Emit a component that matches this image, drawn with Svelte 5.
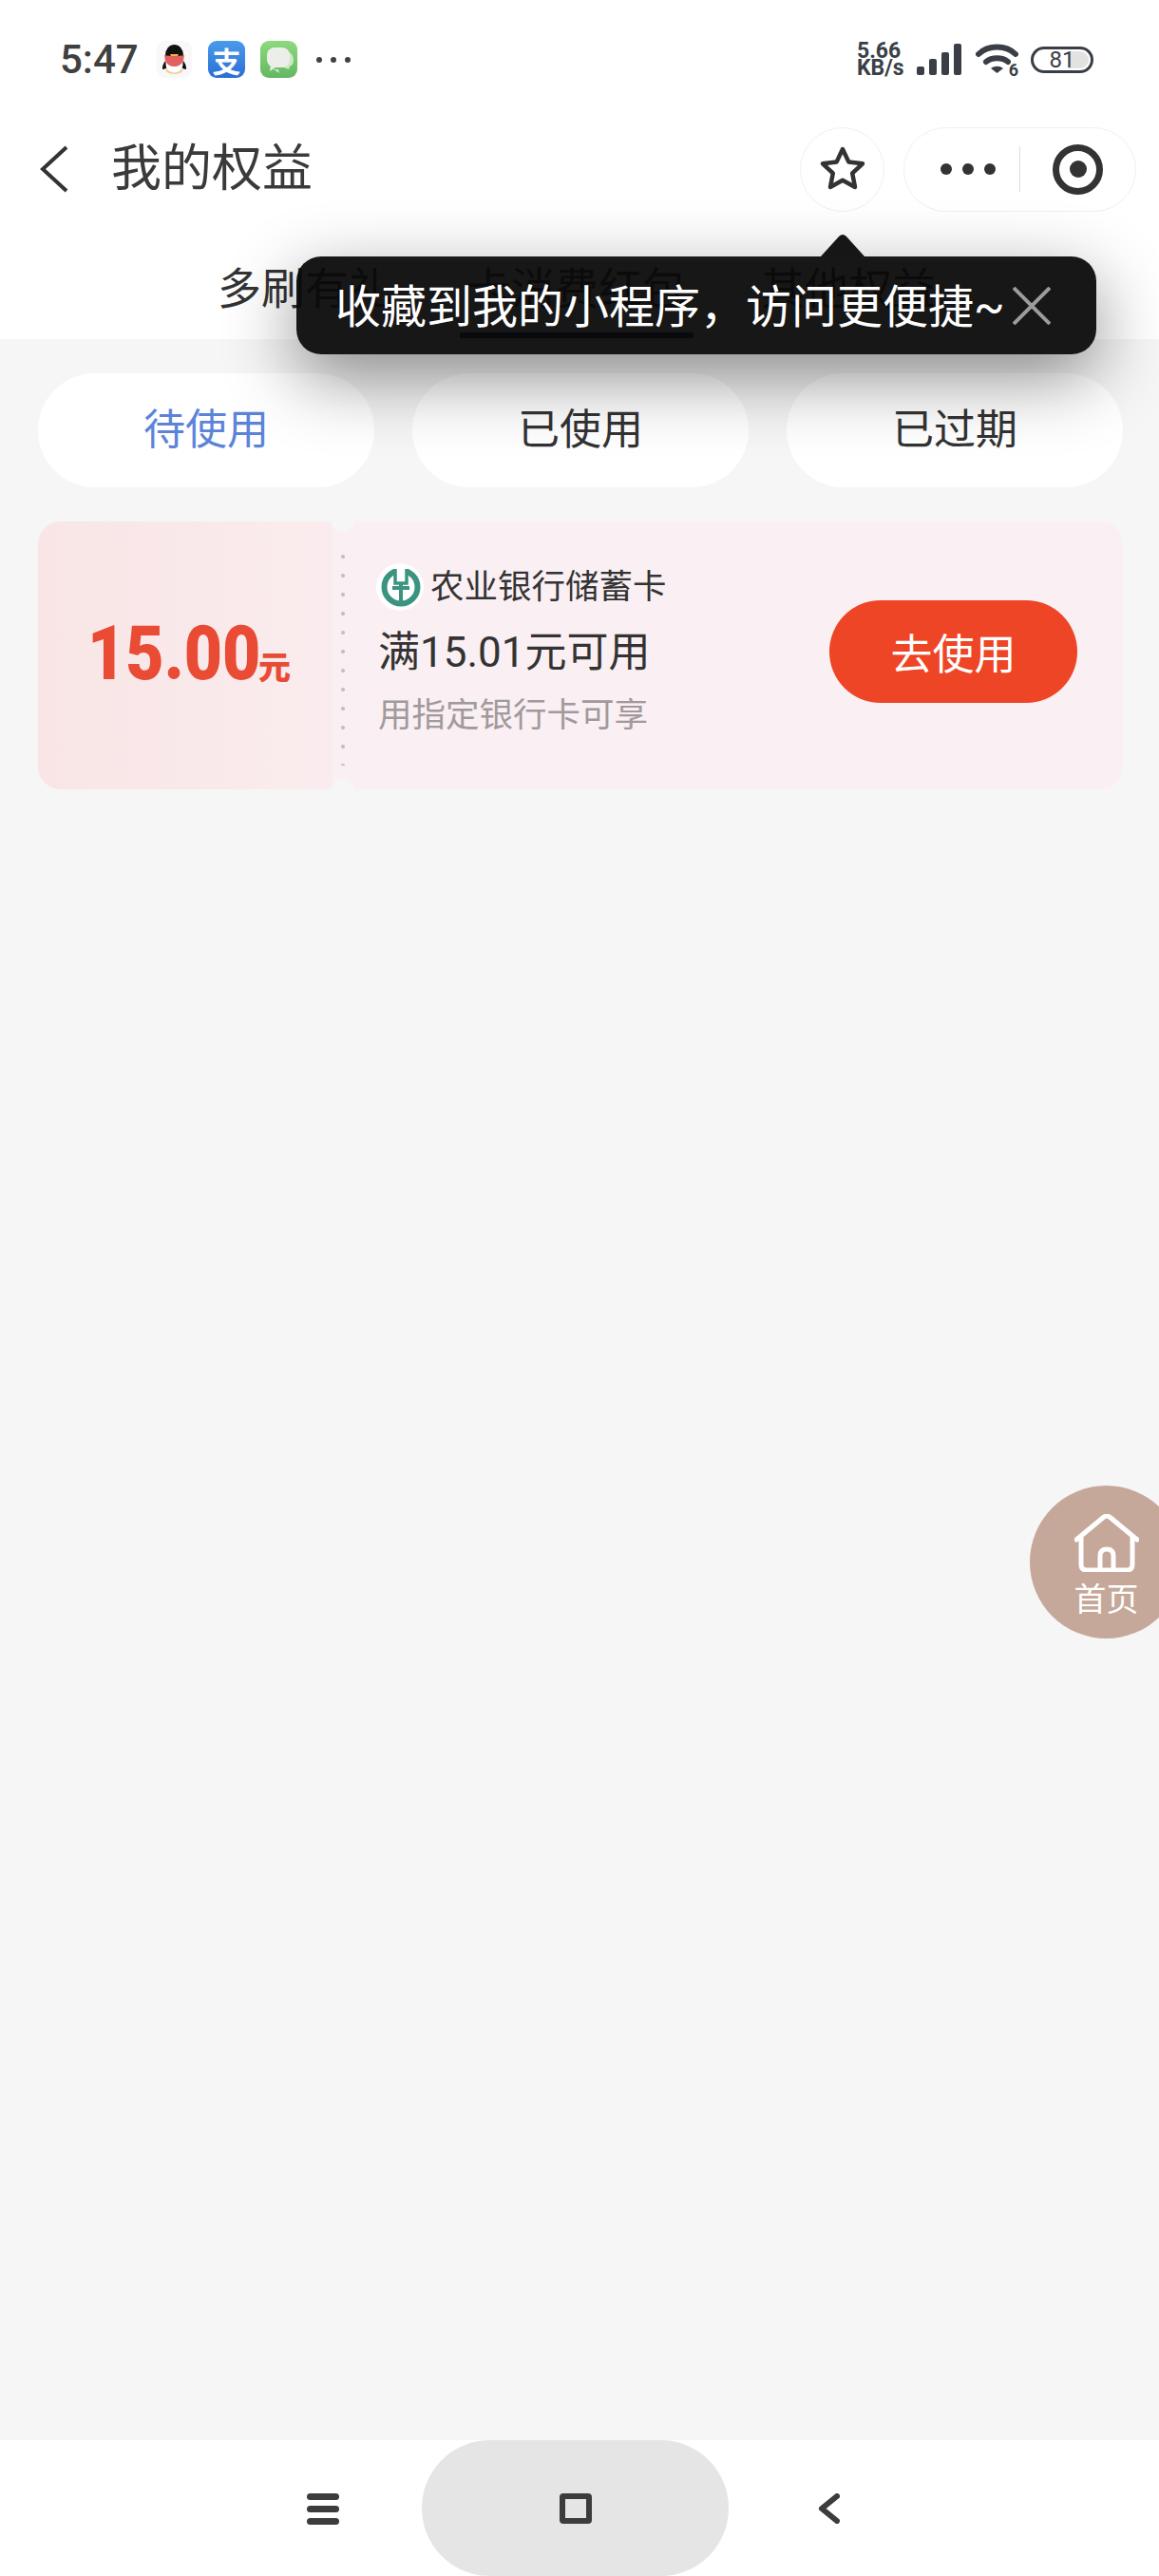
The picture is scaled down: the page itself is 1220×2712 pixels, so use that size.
<script>
  const filters = [
    { label: '待使用', active: true },
    { label: '已使用', active: false },
    { label: '已过期', active: false }
  ];
</script>

<div class="page">
  <header class="top">
    <div class="status">
      <div class="status-left">
        <span class="time">5:47</span>
        <span class="tile qq">
          <svg viewBox="0 0 37 39" width="37" height="39">
            <ellipse cx="18.5" cy="31" rx="9" ry="4" fill="#f2a33a" opacity=".5" />
            <ellipse cx="18.5" cy="15" rx="9.500" ry="11" fill="#111" />
            <path d="M9 21c-2 3-3.500 6-3 9 2 0 3.500-1 5-2zM28 21c2 3 3.500 6 3 9-2 0-3.500-1-5-2z" fill="#111" />
            <ellipse cx="18.5" cy="25" rx="9" ry="8.500" fill="#fff" />
            <path d="M8 15c6 1.500 15 1.500 21 0l-1 6c-2 4-5 6-9.500 6S11 25 9 21z" fill="#e0615f" />
            <path d="M14 14h9l-1 2h-7z" fill="#f0b53c" />
          </svg>
        </span>
        <span class="tile alipay">支</span>
        <span class="tile msg">
          <svg viewBox="0 0 39 39" width="39" height="39">
            <path d="M14 30l6 4-1-4z" fill="#e9efe6" opacity=".8" />
            <path d="M30 12c3 1 5 4 5 8 0 3-1 6-4 7l-1 3-5-2h-8z" fill="#cfe6c7" />
            <rect x="7" y="7" width="24" height="21" rx="8" fill="#ecefe9" />
            <path d="M11 26l-1 6 6-4z" fill="#ecefe9" />
          </svg>
        </span>
        <span class="more-dots"><i></i><i></i><i></i></span>
      </div>
      <div class="status-right">
        <div class="speed"><span>5.66</span><span>KB/s</span></div>
        <div class="signal"><i class="b1"></i><i class="b2"></i><i class="b3"></i><i class="b4"></i></div>
        <div class="wifi">
          <svg viewBox="0 0 45 33" width="45" height="33">
            <path d="M3 11C13 1 32 1 42 11" fill="none" stroke="#3a3f47" stroke-width="6" stroke-linecap="round" />
            <path d="M11 19c6-5 17-5 23 0" fill="none" stroke="#3a3f47" stroke-width="6" stroke-linecap="round" />
            <path d="M16 26c4-3 9-3 13 0l-6.500 5z" fill="#3a3f47" />
          </svg>
          <span>6</span>
        </div>
        <div class="battery"><i></i><span>81</span></div>
      </div>
    </div>

    <nav class="navbar">
      <svg class="back" viewBox="0 0 31 50" width="31" height="50">
        <path d="M29 2L4 25l25 23" fill="none" stroke="#333" stroke-width="4" />
      </svg>
      <h1>我的权益</h1>
      <button class="star-btn" aria-label="收藏">
        <svg viewBox="0 0 50 50" width="50" height="50">
          <path d="M25 4l6.300 13.400 14.700 1.900-10.800 10.100 2.800 14.600L25 36.800l-13 7.200 2.800-14.600L4 19.300l14.700-1.900z" fill="none" stroke="#333" stroke-width="4.500" stroke-linejoin="round" />
        </svg>
      </button>
      <div class="capsule">
        <span class="cap-dots"><i></i><i></i><i></i></span>
        <span class="cap-line"></span>
        <span class="record"><i></i></span>
      </div>
    </nav>

    <div class="tabs">
      <span class="tab">多刷有礼</span>
      <span class="tab current">卡消费红包</span>
      <span class="tab">其他权益</span>
    </div>
  </header>

  <main class="content">
    <div class="filters">
      {#each filters as f}
        <div class="filter" class:active={f.active}>{f.label}</div>
      {/each}
    </div>

    <div class="card">
      <div class="stub">
        <span class="amount">15.00</span><span class="unit">元</span>
      </div>
      <div class="detail">
        <div class="info">
          <div class="bank">
            <span class="logo">
              <svg viewBox="0 0 50 50" width="50" height="50">
                <circle cx="25" cy="25" r="25" fill="#fff" />
                <circle cx="26" cy="25" r="17.500" fill="none" stroke="#3b9480" stroke-width="6" />
                <rect x="19" y="3" width="14" height="8" fill="#fff" />
                <path d="M20 6v15h12V6" fill="none" stroke="#3b9480" stroke-width="3.500" />
                <path d="M24.500 4v11h3V4" fill="#fff" />
                <path d="M17 26h18M26 21v22" fill="none" stroke="#3b9480" stroke-width="4" />
              </svg>
            </span>
            <span>农业银行储蓄卡</span>
          </div>
          <div class="limit">满15.01元可用</div>
          <div class="hint">用指定银行卡可享</div>
        </div>
        <button class="use-btn">去使用</button>
      </div>
      <span class="notch n-top"></span>
      <span class="notch n-bottom"></span>
      <span class="perf"></span>
    </div>
  </main>

  <footer class="sysnav">
    <span class="menu"><i></i><i></i><i></i></span>
    <span class="home-pill"><span class="square"></span></span>
    <svg class="sys-back" viewBox="0 0 23 32" width="23" height="32">
      <path d="M20 3L4 16l16 13" fill="none" stroke="#3c3c3c" stroke-width="6" stroke-linecap="round" stroke-linejoin="round" />
    </svg>
  </footer>

  <div class="tooltip">
    <svg class="arrow" viewBox="0 0 46 24" width="46" height="24">
      <path d="M0 24L19 3q4-4 8 0l19 21z" fill="#161616" />
    </svg>
    <span class="tip-text">收藏到我的小程序，访问更便捷~</span>
    <svg class="tip-close" viewBox="0 0 40 40" width="40" height="40">
      <path d="M1 1l38 38M39 1L1 39" stroke="#9c9c9c" stroke-width="4" fill="none" />
    </svg>
  </div>

  <div class="home-float">
    <svg viewBox="0 0 68 61" width="68" height="61">
      <path d="M2 27L31 3q3-2 6 0l29 24" fill="none" stroke="#fff" stroke-width="5" stroke-linecap="round" stroke-linejoin="round" />
      <path d="M7 25v28q0 6 6 6h42q6 0 6-6V25" fill="none" stroke="#fff" stroke-width="5" stroke-linecap="round" />
      <path d="M27 58V44q0-7 7-7t7 7v14" fill="none" stroke="#fff" stroke-width="5" />
    </svg>
    <span>首页</span>
  </div>
</div>

<style>
  :global(body) {
    margin: 0;
    background: #f6f6f6;
  }

  .page {
    position: relative;
    display: flex;
    flex-direction: column;
    width: 1220px;
    height: 2712px;
    overflow: hidden;
    background: #f6f6f6;
    color: #333;
    font-family: Roboto, "Noto Sans CJK SC", sans-serif;
  }

  .top {
    background: #fff;
    height: 357px;
    flex-shrink: 0;
  }

  .status {
    display: flex;
    justify-content: space-between;
    align-items: center;
    height: 125px;
    padding: 0 69px 0 63px;
    box-sizing: border-box;
  }

  .status-left,
  .status-right {
    display: flex;
    align-items: center;
  }

  .time {
    width: 80px;
    margin-right: 22px;
    font-size: 42px;
    font-weight: 500;
    color: #404040;
    white-space: nowrap;
  }

  .tile {
    display: flex;
    align-items: center;
    justify-content: center;
    height: 39px;
    width: 39px;
    border-radius: 9px;
    margin-right: 16px;
    overflow: hidden;
  }

  .qq {
    width: 37px;
    margin-right: 17px;
    background: #f8f8f8;
  }

  .alipay {
    background: linear-gradient(#4a9bea, #2a6fd6);
    color: #fff;
    font-size: 30px;
    font-weight: 700;
  }

  .msg {
    background: linear-gradient(#8ed97d, #62b862);
    margin-right: 20px;
  }

  .more-dots {
    display: flex;
    gap: 9px;
  }

  .more-dots i {
    width: 6px;
    height: 6px;
    border-radius: 50%;
    background: #404040;
  }

  .speed {
    display: flex;
    flex-direction: column;
    width: 50px;
    margin-right: 13px;
    font-size: 23px;
    line-height: 18px;
    font-weight: 700;
    color: #3a3f47;
  }

  .signal {
    display: flex;
    align-items: flex-end;
    gap: 5px;
    height: 33px;
    margin-right: 15px;
  }

  .signal i {
    width: 8px;
    border-radius: 2px;
    background: #3a3f47;
  }

  .b1 { height: 9px; }
  .b2 { height: 17px; }
  .b3 { height: 24px; }
  .b4 { height: 33px; }

  .wifi {
    position: relative;
    width: 45px;
    height: 33px;
    margin-right: 13px;
  }

  .wifi span {
    position: absolute;
    right: 0;
    bottom: -4px;
    font-size: 18px;
    line-height: 18px;
    font-weight: 700;
    color: #3a3f47;
  }

  .battery {
    position: relative;
    display: flex;
    align-items: center;
    justify-content: center;
    width: 66px;
    height: 28px;
    box-sizing: border-box;
    border: 3px solid #3a3f47;
    border-radius: 14px;
  }

  .battery i {
    position: absolute;
    top: 2px;
    right: 2px;
    bottom: 2px;
    width: 22px;
    border-radius: 0 9px 9px 0;
    background: #e2e2e2;
  }

  .battery span {
    position: relative;
    font-size: 24px;
    color: #3a3f47;
    line-height: 1;
  }

  .navbar {
    display: flex;
    align-items: center;
    height: 106px;
    padding: 0 24px 0 41px;
    box-sizing: border-box;
  }

  .back {
    margin-right: 45px;
  }

  h1 {
    margin: 0 auto 10px 0;
    font-size: 53px;
    font-weight: 400;
    color: #3a3a3a;
  }

  .star-btn {
    display: flex;
    align-items: center;
    justify-content: center;
    width: 89px;
    height: 89px;
    margin-right: 20px;
    padding: 0;
    background: #fff;
    border: 1px solid #f0f0f0;
    border-radius: 50%;
  }

  .capsule {
    display: flex;
    align-items: center;
    width: 245px;
    height: 89px;
    box-sizing: border-box;
    padding-left: 38px;
    border: 1px solid #f0f0f0;
    border-radius: 45px;
  }

  .cap-dots {
    display: flex;
    gap: 11px;
    margin-right: 25px;
  }

  .cap-dots i {
    width: 12px;
    height: 12px;
    border-radius: 50%;
    background: #333;
  }

  .cap-line {
    width: 1px;
    height: 48px;
    margin-right: 34px;
    background: #ddd;
  }

  .record {
    display: flex;
    align-items: center;
    justify-content: center;
    width: 53px;
    height: 53px;
    box-sizing: border-box;
    border: 7px solid #333;
    border-radius: 50%;
  }

  .record i {
    width: 18px;
    height: 18px;
    border-radius: 50%;
    background: #333;
  }

  .tabs {
    display: flex;
    justify-content: center;
    gap: 71px;
    height: 126px;
    padding-right: 6px;
  }

  .tab {
    height: 119px;
    line-height: 146px;
    font-size: 46px;
    white-space: nowrap;
  }

  .current {
    height: 125px;
    padding: 0 8px;
    box-sizing: border-box;
    border-bottom: 6px solid #1b2a6b;
  }

  .content {
    flex: 1;
    padding: 36px 38px 0 40px;
  }

  .filters {
    display: flex;
    gap: 40px;
  }

  .filter {
    flex: 1;
    height: 120px;
    line-height: 120px;
    text-align: center;
    font-size: 44px;
    background: #fff;
    border-radius: 60px;
  }

  .filter.active {
    color: #5b84d9;
  }

  .card {
    position: relative;
    display: flex;
    height: 282px;
    margin-top: 36px;
    border-radius: 24px;
    overflow: hidden;
    background: #faeff2;
  }

  .stub {
    display: flex;
    align-items: baseline;
    width: 310px;
    box-sizing: border-box;
    padding: 89px 0 0 52px;
    background: linear-gradient(90deg, #f9e5e6, #faecee);
    color: #e94b35;
    font-weight: 700;
  }

  .amount {
    display: inline-block;
    width: 180px;
    font-size: 80px;
    font-weight: 900;
    line-height: 100px;
    white-space: nowrap;
    transform: scaleX(0.87);
    transform-origin: left center;
  }

  .unit {
    font-size: 34px;
    font-weight: 900;
  }

  .detail {
    flex: 1;
    display: flex;
    align-items: center;
    justify-content: space-between;
    padding: 0 48px 0 48px;
  }

  .info {
    display: flex;
    flex-direction: column;
    padding-bottom: 11px;
  }

  .bank {
    display: flex;
    align-items: center;
    gap: 7px;
    margin-left: -2px;
    font-size: 35.500px;
    line-height: 50px;
  }

  .logo {
    display: flex;
  }

  .limit {
    margin-top: 17px;
    font-size: 44px;
    line-height: 54px;
  }

  .hint {
    margin-top: 16px;
    font-size: 35.500px;
    line-height: 46px;
    color: #a09a9c;
  }

  .use-btn {
    width: 261px;
    height: 108px;
    margin-bottom: 8px;
    padding: 0;
    border: 0;
    border-radius: 54px;
    background: #ed4525;
    color: #fff;
    font-family: inherit;
    font-size: 44px;
  }

  .notch {
    position: absolute;
    left: 308px;
    width: 25px;
    height: 25px;
    border-radius: 50%;
    background: #f6f6f6;
  }

  .n-top { top: -14px; }
  .n-bottom { bottom: -14px; }

  .perf {
    position: absolute;
    left: 319px;
    top: 27px;
    width: 4px;
    height: 230px;
    background: radial-gradient(circle, #c9c0c3 2px, transparent 2.200px) 0 0 / 4px 20px repeat-y;
  }

  .sysnav {
    position: relative;
    flex-shrink: 0;
    height: 143px;
    background: #fff;
    overflow: hidden;
  }

  .menu {
    position: absolute;
    left: 323px;
    top: 56px;
    display: flex;
    flex-direction: column;
    gap: 6px;
    width: 34px;
  }

  .menu i {
    height: 7px;
    border-radius: 4px;
    background: #3c3c3c;
  }

  .home-pill {
    position: absolute;
    left: 444px;
    top: 0;
    display: flex;
    align-items: center;
    justify-content: center;
    width: 323px;
    height: 143px;
    border-radius: 72px;
    background: #e5e5e5;
  }

  .square {
    width: 34px;
    height: 32px;
    box-sizing: border-box;
    border: 6px solid #3c3c3c;
    border-radius: 4px;
  }

  .sys-back {
    position: absolute;
    left: 861px;
    top: 56px;
  }

  .tooltip {
    position: absolute;
    left: 312px;
    top: 270px;
    display: flex;
    align-items: center;
    width: 842px;
    height: 103px;
    box-sizing: border-box;
    padding-left: 41px;
    border-radius: 26px;
    background: rgba(8, 8, 8, 0.94);
    box-shadow: 0 24px 76px rgba(0, 0, 0, 0.45);
  }

  .arrow {
    position: absolute;
    left: 552px;
    top: -24px;
  }

  .tip-text {
    width: 713px;
    margin-bottom: 6px;
    font-size: 48px;
    color: #fff;
    white-space: nowrap;
  }

  .home-float {
    position: absolute;
    left: 1084px;
    top: 1564px;
    display: flex;
    flex-direction: column;
    align-items: center;
    width: 161px;
    height: 161px;
    padding-top: 30px;
    box-sizing: border-box;
    border-radius: 50%;
    background: #c5a899;
    color: #fff;
  }

  .home-float span {
    margin-top: 6px;
    font-size: 34px;
    line-height: 46px;
  }
</style>
